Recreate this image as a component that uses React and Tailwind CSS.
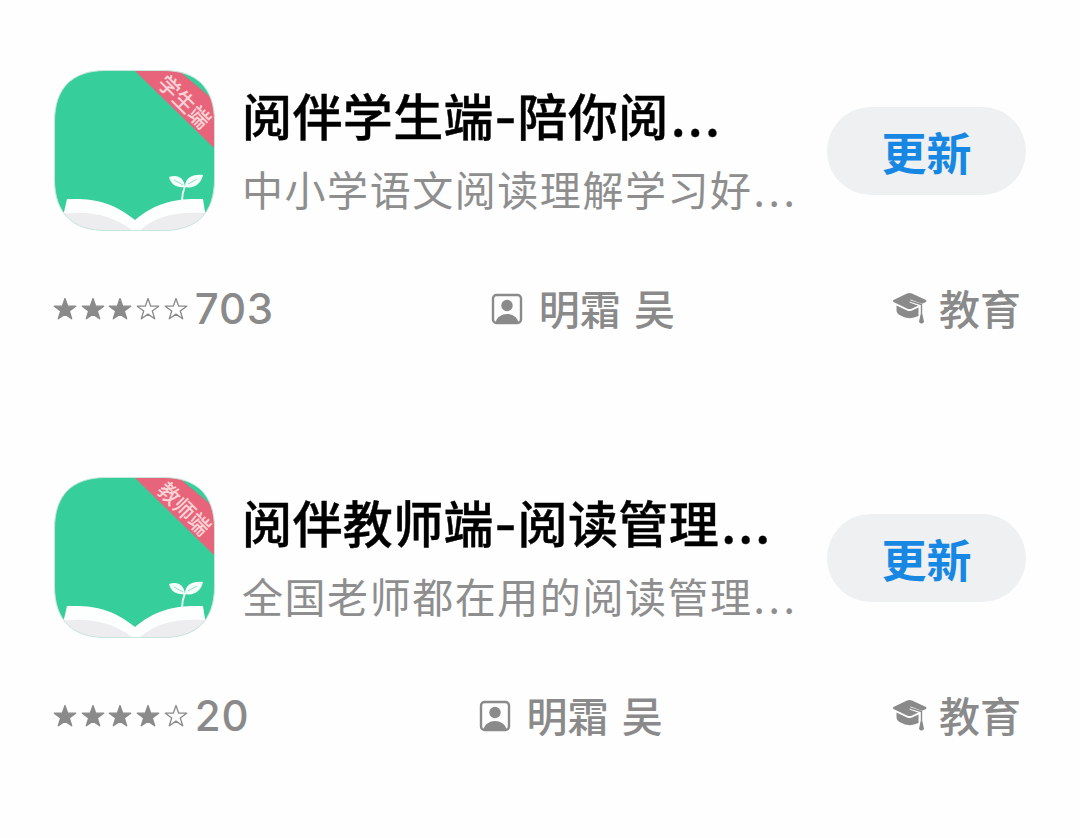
import React from 'react';

const apps = [
  {
    id: 'student',
    ribbon: '学生端',
    title: ['阅伴学生端', '陪你阅'],
    subtitle: '中小学语文阅读理解学习好',
    stars: 3,
    count: '703',
  },
  {
    id: 'teacher',
    ribbon: '教师端',
    title: ['阅伴教师端', '阅读管理'],
    subtitle: '全国老师都在用的阅读管理',
    stars: 4,
    count: '20',
  },
];

const SQUIRCLE =
  'M52 0.5H109C143 0.5 160.500 18 160.500 52V109C160.500 143 143 160.500 109 160.500H52C18 160.500 0.5 143 0.5 109V52C0.5 18 18 0.5 52 0.5Z';

function AppIcon({ id, label }) {
  return (
    <svg viewBox="0 0 161 161" className="w-[161px] h-[161px] shrink-0 overflow-visible">
      <clipPath id={`mask-${id}`}>
        <path d={SQUIRCLE} />
      </clipPath>
      <g clipPath={`url(#mask-${id})`}>
        <rect width="161" height="161" fill="#36ce9b" />
        {/* Ribbon */}
        <path d="M80 0H124L161 31V79Z" fill="#e8647a" />
        {/* Book */}
        <path d="M13 129C42 128 60 133 81 150C101 133 121 128 149 129L151 142L161 143V161H0V143L10 142Z" fill="#fdfffe" />
        <path d="M0 145C34 139 58 145 78 160L80 161H0Z" fill="#ededef" />
        <path d="M161 144C126 140 102 145 85 161H161Z" fill="#ededef" />
        {/* Sprout */}
        <path d="M128 131C128 126 129 121 131 116" fill="none" stroke="#eafff6" strokeWidth="2" />
        <path d="M115 107C124 104 130 108 131 117C123 118 117 115 115 107Z" fill="#f4fffa" />
        <path d="M131 117C131 108 138 104 149 105C147 114 140 119 131 117Z" fill="#f4fffa" />
        <path d="M120 110L129 115M134 114L143 109" stroke="#8fe2c3" strokeWidth="1" />
      </g>
      <path d={SQUIRCLE} fill="none" stroke="#c9e6db" strokeWidth="1" />
      <text
        x="130"
        y="39.500"
        textAnchor="middle"
        fontSize="21.500"
        fill="#fbd3d6"
        transform="rotate(45 130 32)"
        className="font-['Noto_Sans_CJK_SC',sans-serif] font-medium"
      >
        {label}
      </text>
    </svg>
  );
}

function Star({ filled }) {
  return (
    <svg viewBox="0 0 24 24" className="w-6 h-6">
      <path
        d="M12 1.500L14.700 9.200H22.700L16.300 14L18.700 21.800L12 17.100L5.300 21.800L7.700 14L1.300 9.200H9.300Z"
        fill={filled ? '#8a8a8a' : 'none'}
        stroke="#8a8a8a"
        strokeWidth="1.300"
        strokeLinejoin="round"
      />
    </svg>
  );
}

function PersonIcon() {
  return (
    <svg viewBox="0 0 32 32" className="w-8 h-8">
      <rect x="2" y="2" width="28" height="28" rx="3.500" fill="none" stroke="#8a8a8a" strokeWidth="2.400" />
      <circle cx="16" cy="12.500" r="5.700" fill="#8a8a8a" />
      <path d="M4.500 29.500C7 18 25 18 27.500 29.500Z" fill="#8a8a8a" />
    </svg>
  );
}

function CapIcon() {
  return (
    <svg viewBox="0 0 36 34" className="w-9 h-[34px] -mt-0.5" fill="#8a8a8a">
      <path d="M1.500 9L15 2.500Q17.500 1.500 20 2.500L34 9Q35 10 34 11L20 17.500Q17.500 18.500 15 17.500L1.500 11Q0 10 1.500 9Z" />
      <path d="M4.500 14.500L15 19.500Q17.500 20.500 20 19.500L26.500 16.500V25Q17 29.500 8.500 24.500Q4.500 22.500 4.500 19Z" />
      <path d="M18 10L29 14V24" fill="none" stroke="#fefefe" strokeWidth="3" />
      <path d="M18 10L29.500 13.500V24" fill="none" stroke="#8a8a8a" strokeWidth="1.400" />
      <path d="M28.500 23.500H30.500L32 31Q29.500 34 27 31Z" />
    </svg>
  );
}

function AppCard({ app }) {
  return (
    <section className="h-[407px]">
      <div className="flex items-center h-[161px]">
        <AppIcon id={app.id} label={app.ribbon} />
        <div className="ml-[27px] pb-px flex-1 whitespace-nowrap">
          <h2 className="text-[50px] leading-[72px] tracking-[0.400px] font-medium text-black [-webkit-text-stroke:0.4px_#000]">
            {app.title[0]}
            <span className="font-['Inter',sans-serif]">-</span>
            {app.title[1]}
            <span className="ml-0.5 tracking-[2.200px]">...</span>
          </h2>
          <p className="text-[41px] leading-[68px] tracking-[1.550px] font-normal text-[#8e8e8e]">
            {app.subtitle}
            <span className="ml-px tracking-[3.500px]">...</span>
          </p>
        </div>
        <button className="w-[199px] h-[88px] rounded-full bg-[#eff0f1] text-[#1687e3] text-[45px] leading-none font-bold pt-0.5">
          更新
        </button>
      </div>

      <div className="flex items-center justify-between mt-12 h-[60px] -ml-px pr-[5px] text-[41px] leading-[60px] font-medium text-[#8a8a8a]">
        <div className="flex items-center">
          <div className="flex gap-[3.700px]">
            {[0, 1, 2, 3, 4].map((i) => (
              <Star key={i} filled={i < app.stars} />
            ))}
          </div>
          <span className="ml-[7px] text-[42px] tracking-[0.800px] font-['Inter',sans-serif]">{app.count}</span>
        </div>
        <div className="flex items-center gap-4">
          <PersonIcon />
          <span className="-mt-1 [word-spacing:4px]">明霜 吴</span>
        </div>
        <div className="flex items-center gap-[11px]">
          <CapIcon />
          <span className="-mt-1">教育</span>
        </div>
      </div>
    </section>
  );
}

export default function App() {
  return (
    <main className="w-[1080px] h-[838px] overflow-hidden bg-[#fefefe] pt-[70px] pl-[54px] pr-[54px] font-['Noto_Sans_CJK_SC',sans-serif]">
      {apps.map((app) => (
        <AppCard key={app.id} app={app} />
      ))}
    </main>
  );
}
